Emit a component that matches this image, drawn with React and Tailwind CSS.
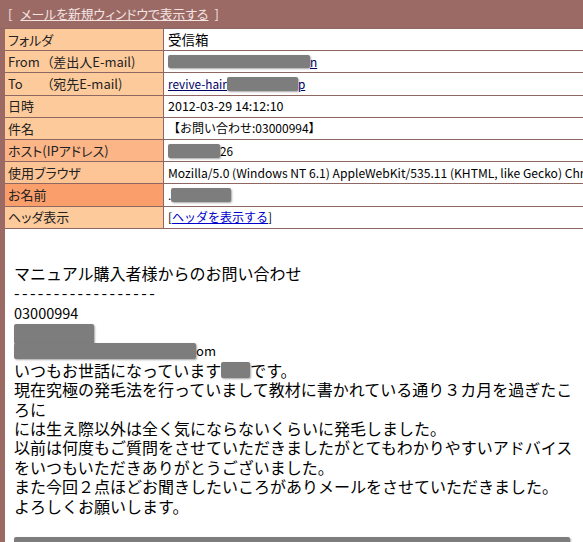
import React from 'react';

const Redact = ({ className = '' }) => (
  <span className={`inline-block bg-[#7d7d7d] rounded-[2px] shadow-[1px_1px_2px_rgba(0,0,0,0.35)] align-middle ${className}`} />
);

const Row = ({ label, bg = 'bg-[#fdca9b]', children, valueClass = 'text-[11.8px]' }) => (
  <div className="flex h-[22.2px] border-b border-[#8e6763]">
    <div className={`w-[159px] shrink-0 flex items-center pl-[3px] text-[13px] text-[#222] border-r border-[#8e6763] [font-feature-settings:'palt'] ${bg}`}>
      {label}
    </div>
    <div className={`flex-1 flex items-center pl-[4px] whitespace-nowrap overflow-hidden bg-white text-black ${valueClass}`}>
      {children}
    </div>
  </div>
);

export default function App() {
  return (
    <div
      className="w-[583px] h-[542px] overflow-hidden bg-white"
      style={{ fontFamily: '"Noto Sans CJK JP", "Noto Sans", sans-serif' }}
    >
      <div className="h-[29px] bg-[#9b6a65] border-b border-[#8e6763] flex items-center pl-[8px] text-[12.8px] text-[#f4e4e2] [font-feature-settings:'palt']">
        <span>[</span>
        <span className="underline ml-[8px] mr-[6px]">メールを新規ウィンドウで表示する</span>
        <span>]</span>
      </div>
      <div className="border-l-[5px] border-[#9b6a65] h-full">
        <Row label="フォルダ" valueClass="text-[13.5px]">受信箱</Row>
        <Row label={<><span>From</span><span className="ml-[7px]">（差出人E-mail)</span></>}>
          <span className="underline text-[#000066] flex items-center">
            <Redact className="w-[142px] h-[13px]" />n
          </span>
        </Row>
        <Row label={<><span>To</span><span className="ml-[24px]">（宛先E-mail)</span></>}>
          <span className="underline text-[#000066] flex items-center">
            revive-hair<Redact className="w-[71px] h-[14px]" />p
          </span>
        </Row>
        <Row label="日時" valueClass="text-[12.5px]">2012-03-29 14:12:10</Row>
        <Row label="件名" valueClass="text-[12px]">【お問い合わせ:03000994】</Row>
        <Row label="ホスト(IPアドレス)" bg="bg-[#fbb587]">
          <Redact className="w-[52px] h-[14px]" />26
        </Row>
        <Row label="使用ブラウザ" bg="bg-[#fdc596]" valueClass="text-[12.1px]">
          Mozilla/5.0 (Windows NT 6.1) AppleWebKit/535.11 (KHTML, like Gecko) Chrome/17.0.963.83 Safari/535.11
        </Row>
        <Row label="お名前" bg="bg-[#fa9f6b]">
          .<Redact className="w-[60px] h-[14px]" />
        </Row>
        <Row label="ヘッダ表示" valueClass="text-[12px]">
          [<span className="underline text-[#0000cc]">ヘッダを表示する</span>]
        </Row>
        <div className="pt-[35px] pl-[9px] text-[16px] leading-[19.4px] text-black whitespace-nowrap">
          <div>マニュアル購入者様からのお問い合わせ</div>
          <div className="tracking-[2.4px]">------------------</div>
          <div className="text-[14.5px]">03000994</div>
          <div className="flex items-center h-[19.4px]">
            <Redact className="w-[80px] h-[20px] mt-[4px]" />
          </div>
          <div className="flex items-center h-[19.4px]">
            <Redact className="w-[182px] h-[16px]" />
            <span className="text-[13px]">om</span>
          </div>
          <div className="flex items-center">
            いつもお世話になっています<Redact className="w-[29px] h-[16px]" />です。
          </div>
          <div>現在究極の発毛法を行っていまして教材に書かれている通り３カ月を過ぎたこ</div>
          <div>ろに</div>
          <div>には生え際以外は全く気にならないくらいに発毛しました。</div>
          <div>以前は何度もご質問をさせていただきましたがとてもわかりやすいアドバイス</div>
          <div>をいつもいただきありがとうございました。</div>
          <div>また今回２点ほどお聞きしたいころがありメールをさせていただきました。</div>
          <div>よろしくお願いします。</div>
          <div className="h-[19.4px]" />
          <div className="flex items-start h-[19.4px]">
            <Redact className="w-[556px] h-[20px] mt-[2px]" />
          </div>
        </div>
      </div>
    </div>
  );
}
